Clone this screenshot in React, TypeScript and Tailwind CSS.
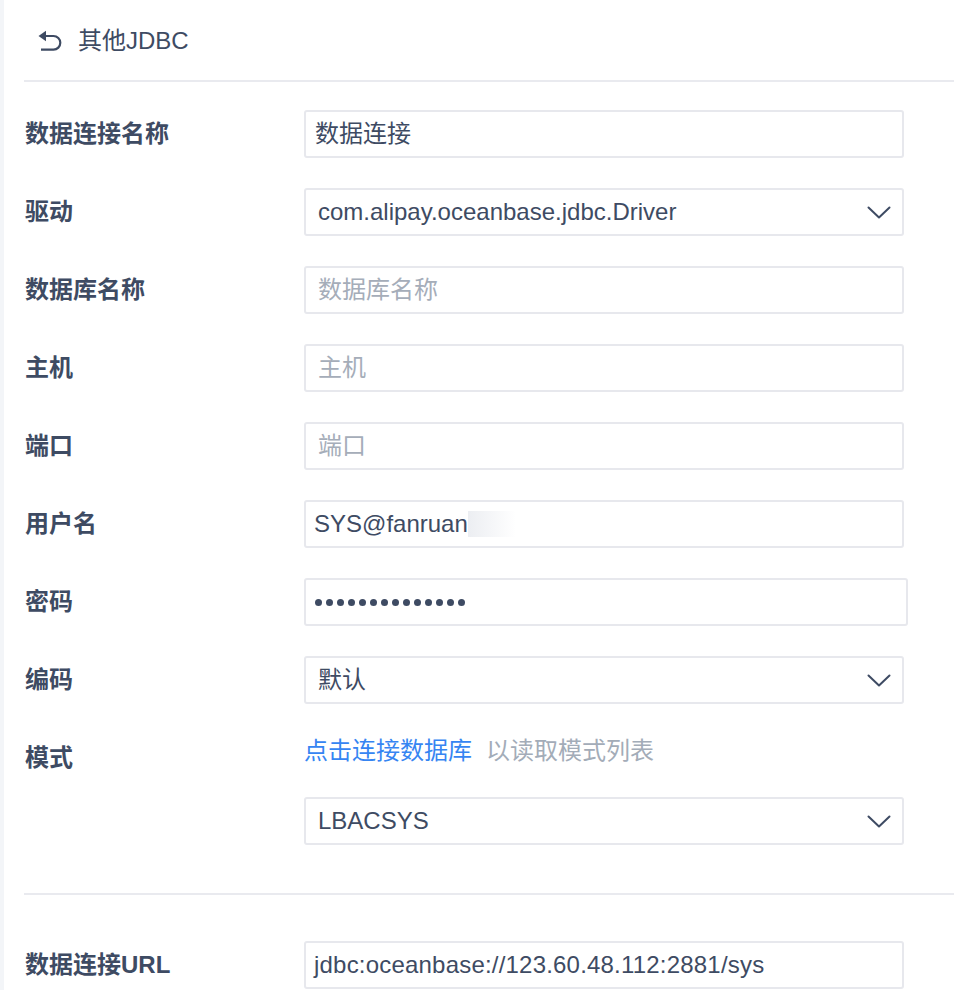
import type { ReactNode } from "react";

const font = { fontFamily: '"Liberation Sans", "Noto Sans CJK SC", sans-serif' };

function Chevron() {
  return (
    <svg width="24" height="13" viewBox="0 0 24 13" fill="none" className="shrink-0">
      <path d="M1.5 1.5 L12 11.5 L22.5 1.5" stroke="#3e4b63" strokeWidth="2" strokeLinecap="round" strokeLinejoin="round" />
    </svg>
  );
}

function BackIcon() {
  return (
    <svg width="24" height="22" viewBox="0 0 24 22" fill="none">
      <path d="M0.5 6 L8 0.8 L8 11.2 Z" fill="#3e4b63" />
      <path d="M7 6 H15.5 A6.8 6.8 0 0 1 15.5 19.6 H3" stroke="#3e4b63" strokeWidth="2.2" fill="none" />
    </svg>
  );
}

function Field({ label, children }: { label: string; children: ReactNode }) {
  return (
    <div className="flex h-[48px] items-center">
      <div className="w-[280px] shrink-0 pl-[1px] text-[24px] font-semibold text-[#3e4b63]">{label}</div>
      {children}
    </div>
  );
}

function Box({ children, wide, className = "" }: { children: ReactNode; wide?: boolean; className?: string }) {
  return (
    <div
      className={`flex h-[48px] items-center rounded-[3px] border-2 border-[#e7e8ed] bg-white text-[24px] text-[#3e4b63] ${
        wide ? "w-[604px]" : "w-[600px]"
      } ${className}`}
    >
      {children}
    </div>
  );
}

function Select({ value }: { value: string }) {
  return (
    <Box className="justify-between pl-[12px] pr-[11px]">
      <span>{value}</span>
      <Chevron />
    </Box>
  );
}

function Placeholder({ text }: { text: string }) {
  return (
    <Box className="pl-[12px]">
      <span className="text-[#a5adb9]">{text}</span>
    </Box>
  );
}

export default function App() {
  return (
    <div className="flex min-h-[990px] bg-white" style={font}>
      <div className="w-[4px] shrink-0 bg-[#f3f5f8]" />
      <div className="flex-1 pl-[20px]">
        <div className="flex h-[80px] items-center gap-[16px] pl-[14px] pt-[2px]">
          <BackIcon />
          <span className="text-[24px] text-[#3e4b63]">其他JDBC</span>
        </div>
        <div className="h-[2px] bg-[#e9eaef]" />

        <div className="flex flex-col gap-[30px] pt-[28px]">
          <Field label="数据连接名称">
            <Box className="pl-[9px]">数据连接</Box>
          </Field>
          <Field label="驱动">
            <Select value="com.alipay.oceanbase.jdbc.Driver" />
          </Field>
          <Field label="数据库名称">
            <Placeholder text="数据库名称" />
          </Field>
          <Field label="主机">
            <Placeholder text="主机" />
          </Field>
          <Field label="端口">
            <Placeholder text="端口" />
          </Field>
          <Field label="用户名">
            <Box className="pl-[8px]">
              <span>SYS@fanruan</span>
              <span className="h-[26px] w-[48px] bg-gradient-to-r from-[#eceef2] to-white" />
            </Box>
          </Field>
          <Field label="密码">
            <Box wide className="gap-[4px] pl-[9px]">
              {Array.from({ length: 14 }).map((_, i) => (
                <span key={i} className="h-[7px] w-[7px] rounded-full bg-[#3e4b63]" />
              ))}
            </Box>
          </Field>
          <Field label="编码">
            <Select value="默认" />
          </Field>

          <div className="flex">
            <div className="flex h-[48px] w-[280px] shrink-0 items-center pl-[1px] text-[24px] font-semibold text-[#3e4b63]">
              模式
            </div>
            <div className="flex flex-col">
              <div className="flex h-[34px] items-center text-[24px]">
                <span className="text-[#3685f2]">点击连接数据库</span>
                <span className="ml-[14px] text-[#a3acb8]">以读取模式列表</span>
              </div>
              <div className="mt-[29px]">
                <Select value="LBACSYS" />
              </div>
            </div>
          </div>
        </div>

        <div className="mt-[48px] h-[2px] bg-[#e9eaef]" />

        <div className="pt-[46px]">
          <Field label="数据连接URL">
            <Box className="pl-[8px]">
              <span className="tracking-[0.2px]">jdbc:oceanbase://123.60.48.112:2881/sys</span>
            </Box>
          </Field>
        </div>
      </div>
    </div>
  );
}
